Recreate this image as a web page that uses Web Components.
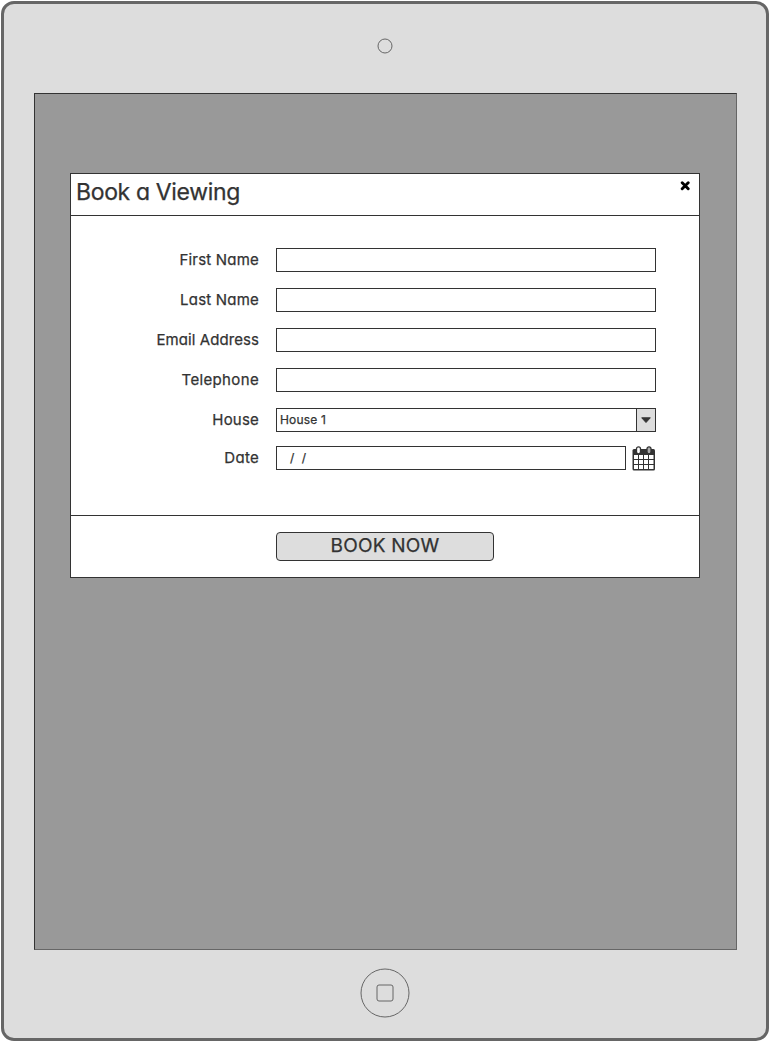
<!DOCTYPE html>
<html lang="en">
<head>
<meta charset="utf-8">
<title>Book a Viewing</title>
<style>
html, body { margin: 0; background: #fff; }
body { width: 770px; height: 1042px; overflow: hidden; font-family: Inter, "Open Sans", sans-serif; -webkit-text-stroke: .25px #333; font-feature-settings: "cv11" 1; color: #333; }
</style>
</head>
<body>
<tablet-frame>
  <modal-dialog>
    <span slot="title">Book a Viewing</span>
    <form-row label="First Name" ls="0.2"><text-box></text-box></form-row>
    <form-row label="Last Name" ls="0.2"><text-box></text-box></form-row>
    <form-row label="Email Address" ls="0.08"><text-box></text-box></form-row>
    <form-row label="Telephone" ls="0.35"><text-box></text-box></form-row>
    <form-row label="House" ls="0.2" class="tight"><select-box>House 1</select-box></form-row>
    <form-row label="Date" ls="0.3"><date-box></date-box></form-row>
    <push-button slot="footer">BOOK NOW</push-button>
  </modal-dialog>
</tablet-frame>
<script>
const define = (name, html, setup) => customElements.define(name, class extends HTMLElement {
  constructor() {
    super();
    this.attachShadow({ mode: 'open' }).innerHTML = html;
  }
  connectedCallback() { if (setup) setup(this, this.shadowRoot); }
});

define('tablet-frame', `<style>
  :host { display: flex; flex-direction: column; align-items: center; box-sizing: border-box; width: 768px; height: 1040px; margin: 1px; border: 3px solid #666; border-radius: 13px; background: #ddd; }
  .camera { height: 89px; display: flex; align-items: center; }
  .camera svg { margin-top: -5px; }
  .screen { box-sizing: border-box; width: 703px; height: 857px; background: #999; border: 1px solid #333; border-right-color: #666; border-bottom-color: #666; padding: 79px 35px 0; margin-left: 1px; }
  .home { flex: 1; display: flex; align-items: center; }
  svg { display: block; fill: none; stroke: #666; }
</style>
<div class="camera"><svg width="16" height="16"><circle cx="8" cy="8" r="7"/></svg></div>
<div class="screen"><slot></slot></div>
<div class="home"><svg width="50" height="50" style="margin-top:-2px"><circle cx="25" cy="25" r="24"/><rect x="17" y="17" width="16" height="16" rx="2"/></svg></div>`);

define('modal-dialog', `<style>
  :host { display: flex; flex-direction: column; box-sizing: border-box; width: 630px; height: 405px; border: 1px solid #333; background: #fff; }
  header { box-sizing: border-box; height: 42px; border-bottom: 1px solid #333; display: flex; justify-content: space-between; padding: 3px 9px 0 5px; font-size: 23px; line-height: 30px; letter-spacing: -.35px; }
  header svg { margin-top: 4px; }
  main { box-sizing: border-box; height: 299px; padding: 32px 43px 0 0; display: flex; flex-direction: column; gap: 16px; }
  ::slotted(.tight) { margin-bottom: -2px; }
  footer { flex: 1; border-top: 1px solid #333; padding: 16px 0 0 205px; }
</style>
<header><slot name="title"></slot><svg width="10" height="10"><path d="M2.2 1.7L8.2 7.7M8.2 1.7L2.2 7.7" stroke="#000" stroke-width="2.9" stroke-linecap="round"/></svg></header>
<main><slot></slot></main>
<footer><slot name="footer"></slot></footer>`);

define('form-row', `<style>
  :host { display: grid; grid-template-columns: 188px 380px; column-gap: 17px; height: 24px; }
  label { text-align: right; font-size: 15px; line-height: 23px; white-space: nowrap; }
</style><label></label><slot></slot>`, (el, root) => {
  const label = root.querySelector('label');
  label.textContent = el.getAttribute('label');
  label.style.letterSpacing = (el.getAttribute('ls') || 0) + 'px';
});

define('text-box', `<style>
  :host { display: block; box-sizing: border-box; height: 24px; border: 1px solid #333; background: #fff; }
</style>`);

define('select-box', `<style>
  :host { display: flex; box-sizing: border-box; height: 24px; border: 1px solid #333; font-size: 12px; line-height: 22px; letter-spacing: .2px; }
  .value { flex: 1; padding-left: 3px; }
  .arrow { width: 18px; background: #ddd; border-left: 1px solid #333; }
  svg { display: block; }
</style><div class="value"><slot></slot></div><div class="arrow"><svg width="18" height="22"><path d="M4.7 8.8H13.3L9 13.5Z" fill="#333" stroke="#333" stroke-linejoin="round"/></svg></div>`);

define('date-box', `<style>
  :host { display: flex; justify-content: space-between; height: 24px; }
  .field { box-sizing: border-box; width: 350px; border: 1px solid #333; padding-left: 13px; font-size: 12px; line-height: 21px; white-space: pre; display: flex; gap: 7.5px; }
  svg { display: block; overflow: visible; }
</style><div class="field"><span>/</span><span>/</span></div>
<svg width="24" height="25">
  <path d="M2 3H21.5Q23 3 23 4.5V23Q23 24.5 21.5 24.5H2Q.5 24.5 .5 23V4.5Q.5 3 2 3Z" fill="#333"/>
  <path fill="#fff" d="M2 9H6V13H2ZM7 9H11V13H7ZM12 9H16V13H12ZM17 9H21.5V13H17ZM2 14H6V18H2ZM7 14H11V18H7ZM12 14H16V18H12ZM17 14H21.5V18H17ZM2 19H6V23H2ZM7 19H11V23H7ZM12 19H16V23H12ZM17 19H21.5V23H17Z"/>
  <rect x="4.5" y=".8" width="4" height="7" rx="2" fill="#fff" stroke="#333" stroke-width="1.3"/>
  <rect x="15" y=".8" width="4" height="7" rx="2" fill="#aaa" stroke="#333" stroke-width="1.3"/>
</svg>`);

define('push-button', `<style>
  :host { display: block; box-sizing: border-box; width: 218px; height: 29px; border: 1px solid #333; border-radius: 4px; background: #ddd; text-align: center; font-size: 19px; line-height: 25px; letter-spacing: .2px; }
</style><slot></slot>`);
</script>
</body>
</html>
